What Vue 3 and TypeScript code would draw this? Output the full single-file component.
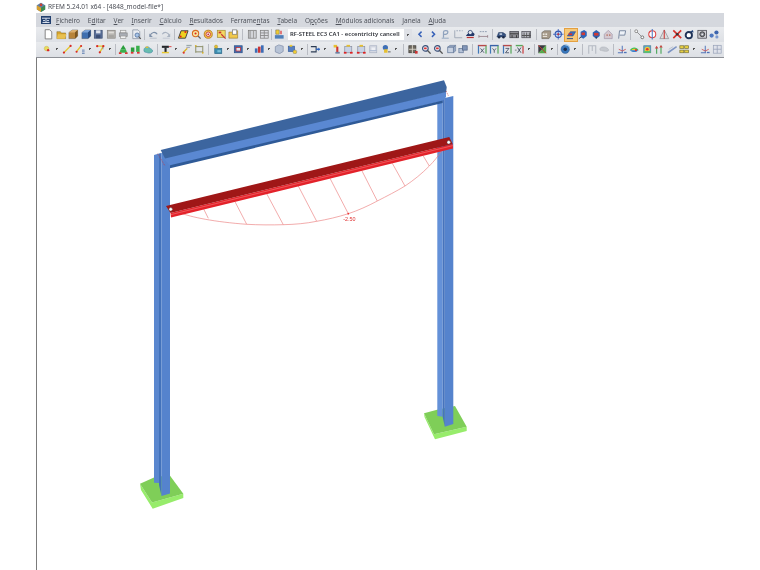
<script setup lang="ts">
type ToolItem = string | number

// tiny svg helpers, all icons live in a 12x12 box
const R = (x: number, y: number, w: number, h: number, f: string, s = 'none') =>
  `<rect x="${x}" y="${y}" width="${w}" height="${h}" fill="${f}" stroke="${s}" stroke-width=".8"/>`
const C = (x: number, y: number, r: number, f: string, s = 'none', sw = 0.9) =>
  `<circle cx="${x}" cy="${y}" r="${r}" fill="${f}" stroke="${s}" stroke-width="${sw}"/>`
const P = (d: string, f: string, s = 'none', sw = 0.9) =>
  `<path d="${d}" fill="${f}" stroke="${s}" stroke-width="${sw}"/>`

const box = (body: string, top: string, side: string) =>
  P('M1 4l4-3h6v7l-3 3H1z', body, '#666', 0.5) + P('M1 4l4-3h6L8 4z', top) + P('M8 4l3-3v7l-3 3z', side)
const blockRed = (c: string) =>
  R(2, 3, 8, 7, c, '#8a8fa0') + R(1, 9, 3, 2, '#d22') + R(8, 9, 3, 2, '#d22') + R(4, 1, 4, 2, '#e6c030')
const mag = (c: string) =>
  C(5, 5, 3.2, '#eef2f8', c, 1.3) + P('M7.5 7.5l3.5 3.5', 'none', '#555', 1.5) + R(3.5, 4, 3, 2, '#d33')
// force icons: coloured frame with a letter sketched in strokes
const fx = (top: string, letter: string) =>
  R(1, 1, 10, 1.6, top) + R(1, 2, 1.4, 9, '#3f78b8') + R(9.6, 2, 1.4, 9, '#58a85c') + P(letter, 'none', '#3a4358', 0.9)

const icons: Record<string, string> = {
  new: P('M2.5 .8h5l2.5 2.5v8h-7.5z', '#fff', '#6a6a6a'),
  open: P('M1 3h4l1 1.5h5v6.5H1z', '#d8a42c', '#7c6220', 0.5) + P('M2 6h10l-2 5H1z', '#e8c050'),
  stackO: box('#b8843a', '#dcb070', '#7c5620'),
  stackB: box('#3f6fb0', '#7ba3d8', '#27497e'),
  save: R(1.5, 1.5, 9, 9, '#5a6f98', '#3b4d72') + R(3.5, 1.5, 5, 3.5, '#dfe3ec') + R(3.5, 7, 5, 3.5, '#3d4f75'),
  saveAll: R(1.5, 1.5, 9, 9, '#b8b6b2', '#86837e') + R(3, 3, 6, 2, '#dedcd8') + R(3, 7, 6, 3, '#a6a4a0'),
  print: R(3, 1.5, 6, 3, '#eee', '#999') + R(1.5, 4.5, 9, 4, '#a9adb5', '#888') + R(3, 8, 6, 3, '#f2f2f2', '#999'),
  preview: P('M2 1h6l2 2v8H2z', '#e8ebf0', '#8a93a2') + C(7, 7, 2.4, '#a8c4e6', '#4f6f9f') + P('M8.7 8.7l2.5 2.5', 'none', '#555', 1.3),
  undo: P('M2.5 7.5c1-4 6-5 8-1.5', 'none', '#7d8fa8', 1.3) + P('M1.5 5v4h4z', '#7d8fa8') + P('M2 10.5h8', 'none', '#a8b2c0', 0.8),
  redo: P('M9.5 7.5c-1-4-6-5-8-1.5', 'none', '#a9b2c0', 1.3) + P('M10.5 5v4h-4z', '#a9b2c0') + P('M2 10.5h8', 'none', '#b8bfca', 0.8),
  para: P('M3.5 2h8l-3 8.5h-8z', '#f0d020', '#333', 1) + C(3, 8.5, 1.2, '#d22') + C(8.5, 3.5, 1.2, '#d22'),
  zoomY: C(5.2, 5.2, 3.6, '#f6e7a0', '#d86a20', 1.2) + C(5.2, 5.2, 1.2, '#d22') + P('M8 8l3 3', 'none', '#666', 1.5),
  target: C(6, 6, 4.6, '#f2c94a', '#b8741a', 1) + C(6, 6, 2.6, '#eee', '#c33', 1) + C(6, 6, 1, '#c22'),
  note: R(1.5, 1.5, 9, 8, '#f3d862', '#a08a30') + P('M6 6l5 5', 'none', '#c33', 1.3) + R(3, 3, 3, 2, '#c33'),
  folderW: P('M1 3.5h4l1-1.5h5v8.5H1z', '#f0c84c', '#8c6d20', 0.6) + R(5, 1, 5, 5, '#fff', '#777'),
  table1: R(1.5, 1.5, 9, 9, '#d2d4d9', '#777') + R(3, 1.5, 1, 9, '#888') + R(7, 1.5, 1, 9, '#999'),
  table2: R(1.5, 1.5, 9, 9, '#dcdde2', '#777') + R(1.5, 4, 9, 1, '#888') + R(1.5, 7, 9, 1, '#888') + R(5.5, 1.5, 1, 9, '#888'),
  loads: R(1, 7, 10, 4, '#4f7fb8') + P('M2 1h4v5H2z', '#f0cc30', '#555', 0.5) + P('M8 2v4', 'none', '#d22', 1.3),
  prev: P('M7.5 3L4.5 6l3 3', 'none', '#3560b8', 1.7),
  next: P('M4.5 3l3 3-3 3', 'none', '#3560b8', 1.7),
  bust: P('M4 10V3.5c0-2 5-2.5 5 0s-3 3-5 2.5', 'none', '#8ea2bd', 1.4) + P('M2 10.5h8', 'none', '#8ea2bd', 1),
  axes: P('M2 1.5v8.5h8.5', 'none', '#9aa4b2', 1) + P('M4 2h1.5M7 2h1.5M10 2h1', 'none', '#8594a8', 1),
  hat: P('M1 8c2-4 8-6 10-2l-1 2z', '#23396a') + C(6, 4, 2.4, '#e4e8ee', '#23396a') + R(2, 9, 8, 1.4, '#b33'),
  dim: P('M1 8.5h10M1 7v3M11 7v3', 'none', '#8a6f78', 0.8) + P('M2 3h2M5 3h2M8 3h2', 'none', '#8f9bb0', 1.1),
  car: P('M1 9l2-5h5l3 2v3z', '#35507e', '#1f3358', 0.5) + C(3.5, 9.5, 1.4, '#1c2a44') + C(8.5, 9.5, 1.4, '#1c2a44') + R(4, 5, 3, 1.6, '#dbe4f0'),
  chest: R(1, 3, 10, 7, '#8d8d93', '#3a3a44') + R(1, 5, 10, 1, '#333') + R(3, 7, 1, 3, '#333') + R(8, 7, 1, 3, '#333'),
  chest2: R(1, 3, 10, 7, '#bbbcc4', '#44444c') + R(1, 7, 10, 1, '#444') + R(3, 4, 1, 6, '#555') + R(6, 4, 1, 6, '#555') + R(9, 4, 1, 6, '#555'),
  block: P('M1 4l3-2h7v6l-2 3H1z', '#a49888', '#5c5850', 0.6) + R(2, 5, 2, 2, '#ece8e0') + R(5, 5, 2, 2, '#ece8e0') + R(2, 8, 5, 1, '#ece8e0'),
  gear: C(6, 6, 3.6, '#cfe0f5', '#2e55b4', 1.2) + P('M6 0v12M0 6h12', 'none', '#2e55b4', 0.9) + C(6, 6, 1.2, '#c33'),
  active: P('M1.5 8L5 3h6L8 8z', '#3a6dbb', '#2a4c90', 0.6) + R(3, 5, 4, 2, '#d8322c') + P('M1 11h7', 'none', '#2a4c90', 1.1),
  iso1: P('M3 3l4-2 3 2v5l-4 3-3-2z', '#2f65b8') + R(4, 4, 4, 3, '#d23a34') + P('M1 11l3-2', 'none', '#333', 1),
  iso2: P('M2 4l4-3 4 3v4l-4 3-4-3z', '#2f5fb0') + R(3.5, 4.5, 5, 3, '#cf3833') + P('M6 9v2', 'none', '#333', 1),
  house: P('M1.5 6L6 1.5 10.5 6v5h-9z', '#d4c8d0', '#9a8fa5', 0.7) + R(4, 6, 1.4, 2, '#b76') + R(7, 6, 1.4, 2, '#b76'),
  flagP: P('M3 11l1-9h7l-1 5H4', '#eef2f8', '#6c7c96', 1),
  chain: C(2.5, 2.5, 1.6, '#fff', '#777', 0.9) + C(9.5, 9.5, 1.6, '#fff', '#555', 0.9) + P('M3.5 3.5l5 5', 'none', '#888', 1),
  phi: C(6, 6, 4, '#fff', '#d44', 1.2) + P('M6 0v12', 'none', '#4d78c2', 1.2),
  tri: P('M6 1l5 10H1z', '#ddd', '#8a8a90', 0.8) + P('M6 1v10', 'none', '#c33', 1.2),
  cross: P('M1.5 1.5l9 9M10.5 1.5l-9 9', 'none', '#d6302a', 1.9) + C(6, 6, 1.5, '#333'),
  ring: C(5.5, 7, 3.6, '#fff', '#1f3358', 2.2) + P('M7 3l3-2 1 3z', '#26457a'),
  camera: R(1, 1.5, 10, 9, '#cfcfd4', '#3c3c44') + C(6, 6, 2.8, '#8c8f98', '#333', 1) + C(6, 6, 1, '#eee'),
  cluster: C(3, 7.5, 2.4, '#4f78c0') + C(8.5, 4, 2.4, '#3c64ad') + C(9, 9, 1.8, '#7c9ad0'),

  dot: C(5.2, 5.2, 2.6, '#e8dc60', '#c0b040', 0.5) + C(7, 7, 1.4, '#d82828'),
  line: P('M2 10L10 2', 'none', '#e2c830', 1.5) + C(2.2, 9.8, 1.3, '#d82828') + C(9.8, 2.2, 1.3, '#d82828'),
  lines: P('M1.5 9L7 2', 'none', '#e2c830', 1.5) + C(1.8, 8.8, 1.2, '#d82828') + C(7, 2.2, 1.2, '#d82828') + P('M8 7h3M8 9h3M8 11h3', 'none', '#4a6fa8', 0.9),
  hook: P('M2.5 2.5h7l-4 7', 'none', '#e2c830', 1.5) + P('M9 3v3', 'none', '#888', 1) + C(2.5, 2.5, 1.3, '#d82828') + C(9.5, 2.5, 1.3, '#d82828') + C(5.5, 9.5, 1.3, '#d82828'),
  green1: P('M6 1l3 5H3z', '#2a9e3c') + P('M3 6h6l1.5 4H1.5z', '#3ab04c') + R(1, 9.5, 3, 2, '#d33') + R(8, 9.5, 3, 2, '#d33'),
  green2: R(1, 4, 4, 5, '#2a9e3c') + R(7, 2, 4, 7, '#3ab04c') + R(1, 9, 3, 2, '#d33') + R(8, 9, 3, 2, '#d33'),
  cloud: P('M1 7c0-3 4-5 6-3s4 2 4 4-4 3-6 2-4 0-4-3z', '#68bdb0', '#4a8ea8', 0.7) + R(3, 3, 3, 1.5, '#e6c030'),
  hbeam: R(1, 2, 8, 2.4, '#26282c') + R(4, 4, 2.4, 6, '#26282c') + R(1, 9, 8, 1.6, '#e8c830') + P('M9 3h3', 'none', '#d33', 1),
  arrows: P('M1 10l5-5', 'none', '#d8b020', 1.6) + R(5, 1, 6, 1.5, '#9aa') + R(5, 3.4, 4, 1.2, '#aab') + C(2, 10, 1.2, '#d33'),
  frame: P('M2 2v8M10 2v8M2 3h8M2 9h8', 'none', '#8a8d66', 1.1) + C(2, 2, 1, '#d8b020') + C(10, 10, 1, '#d8b020'),
  tealBox: R(2, 5, 8, 6, '#3d8db0', '#2d6a8c') + R(5, 7, 4, 2.4, '#7cc0d8') + C(3.5, 3, 1.8, '#e6c030', '#a08a20', 0.5),
  redBox: R(1.5, 2, 9, 8, '#3f6eb2', '#2c4e86') + R(3.5, 4, 5, 4, '#dfe6f0', '#c22'),
  bars: R(1, 5, 3, 5, '#3d6db5') + R(4.5, 3, 3, 7, '#c33') + R(8, 1.5, 3, 8.5, '#3d6db5'),
  shield: P('M1.5 3l4-2 5 1.5v6l-4 2.5-5-2z', '#b7c3d6', '#7f8da8', 0.8),
  bluePin: R(1.5, 2.5, 7, 6, '#567fc0', '#365c9a') + R(3, 1, 3, 2, '#f0cc30') + C(9, 9, 2.2, '#f0cc30', '#777', 0.5),
  pipe: P('M1 3h6v6H1', 'none', '#2c3c54', 1.2) + P('M7 6h4', 'none', '#2a62c0', 1.6) + P('M9.5 4l2 2-2 2z', '#2a62c0'),
  ruler: R(3, 1, 4, 3, '#e6c030') + R(6, 3, 2.4, 7, '#d03430') + R(5, 9, 5, 2, '#6d7fa0'),
  blockR: blockRed('#c7d2e6'),
  blockF: R(2, 2, 8, 8, '#d4d8e2', '#aab2c4') + R(4, 4, 4, 4, '#eef0f5') + R(2, 7, 8, 1, '#aab8d2'),
  person: C(5, 4, 3, '#3f6fb5') + R(3.5, 6, 4, 4, '#e6c030') + P('M8 9h3', 'none', '#555', 1),
  tool: R(1, 2, 8, 8, '#6f6a60', '#3c3a36') + P('M5 1v10M1 6h9', 'none', '#e0dcd0', 1) + R(8, 8, 3, 3, '#c33'),
  magR: mag('#3a4f78'),
  cube: R(2, 3.5, 6.5, 6.5, '#c8d2e2', '#5f7596') + P('M2 3.5l2.5-2h6.5l-2.5 2zM8.5 3.5l2.5-2v6.5l-2.5 2z', '#98a9c4', '#5f7596', 0.6),
  cubes: R(1, 5, 5, 5, '#b6c3d8', '#5f7596') + R(5, 2, 5.5, 5, '#8296b8', '#4d6284'),
  fxX: fx('#b84a4a', 'M4 5l4 5M8 5l-4 5'),
  fxY: fx('#3a62a8', 'M4 5l2 2.5 2-2.5M6 7.5V10'),
  fxZ: fx('#b84a4a', 'M4 5h4l-4 5h4'),
  xz: P('M1 7h2', 'none', '#666', 0.9) + P('M4 4l4 6M8 4l-4 6', 'none', '#3a4358', 1) + R(2, 1, 8, 1.6, '#58a85c') + R(9.6, 2, 1.4, 9, '#c84040'),
  corner: P('M1.5 1.5h9l-9 9z', '#3a3c42') + P('M10.5 1.5v9h-9z', '#58a84a') + P('M1.5 1.5l9 9', 'none', '#c33', 1),
  disc: C(6, 6, 4.8, '#3a78bc', '#2a5a94', 0.6) + C(6, 6, 2, '#1d2c4a') + P('M6 1c3 0 5 2 5 4', 'none', '#9cc6e8', 1.2),
  frameG: P('M2 11V2h8v9M6 2v6', 'none', '#b4b9c2', 1.2),
  cloudG: P('M1 6c0-3 5-3 7-2s3 2 3 3-3 2-6 1-4 0-4-2z', '#c5c9cf', '#a8acb4', 0.6),
  beamP: P('M1 10h6M6 2v8', 'none', '#4d72b8', 1.1) + P('M2 6l4 2 4-2', 'none', '#c44', 0.9) + R(8, 9, 3, 1.5, '#4d72b8'),
  rainbow: P('M1 7c2-4 8-4 10 0z', '#3ebf5c') + P('M3 7c1-2 5-2 6 0z', '#f0cc30') + P('M1 7c3 3 7 3 10 0z', '#3a7fd0') + C(8, 7, 1.2, '#d33'),
  rainbowB: R(2, 2, 8, 8, '#5ea7c8', '#4f7f96') + C(6, 6, 3, '#f0cc30') + C(6, 6, 1.5, '#d33') + R(2, 8, 8, 2, '#5cc46a'),
  arrowsG: P('M3 11V4M8 11V2', 'none', '#4da85c', 1.3) + P('M1 5l2-3 2 3zM6 4l2-3 2 3z', '#c44'),
  lineB: P('M1 10L11 3', 'none', '#7d95c4', 1.8) + P('M2 6l5-3', 'none', '#b7bfcc', 1),
  yGrid: R(1, 2, 4.5, 3, '#e8d040', '#78723a') + R(6.5, 2, 4.5, 3, '#e8d040', '#78723a') + R(1, 7, 4.5, 3, '#e8d040', '#78723a') + R(6.5, 7, 4.5, 3, '#e8d040', '#78723a'),
  gridB: R(1.5, 1.5, 9, 9, '#dfe2ea', '#98a2b8') + P('M6 1.5v9M1.5 6h9', 'none', '#98a2b8', 0.9),
}

const menus: [string, string, string][] = [
  ['', 'F', 'icheiro'], ['E', 'd', 'itar'], ['', 'V', 'er'], ['', 'I', 'nserir'],
  ['', 'C', 'álculo'], ['', 'R', 'esultados'], ['Ferrame', 'n', 'tas'], ['', 'T', 'abela'],
  ['O', 'p', 'ções'], ['', 'M', 'ódulos adicionais'], ['', 'J', 'anela'], ['', 'A', 'juda'],
]

// numbers are separators of that width, 'v' is a dropdown arrow
const upperLeft: ToolItem[] = [
  'new', 'open', 'stackO', 'stackB', 'save', 'saveAll', 'print', 'preview', 5,
  'undo', 'redo', 5, 'para', 'zoomY', 'target', 'note', 'folderW', 6, 'table1', 'table2', 2, 'loads',
]
const upperRight: ToolItem[] = [
  'prev', 'next', 'bust', 'axes', 'hat', 'dim', 6, 'car', 'chest', 'chest2', 7,
  'block', 'gear', 'active', 'iso1', 'iso2', 'house', 'flagP', 6,
  'chain', 'phi', 'tri', 'cross', 'ring', 'camera', 'cluster',
]
const lower: ToolItem[] = [
  'dot', 'v', 'line', 'lines', 'v', 'hook', 'v', 2, 'green1', 'green2', 'cloud', 6,
  'hbeam', 'v', 'arrows', 'frame', 6, 'tealBox', 'v', 'redBox', 'v', 'bars', 'v', 'shield', 'bluePin', 'v', 3,
  'pipe', 'v', 'ruler', 'blockR', 'blockR', 'blockF', 'person', 'v', 7,
  'tool', 'magR', 'magR', 'cube', 'cubes', 6, 'fxX', 'fxY', 'fxZ', 'xz', 'v', 2, 'corner', 'v', 3,
  'disc', 'v', 6, 'frameG', 'cloudG', 5,
  'beamP', 'rainbow', 'rainbowB', 'arrowsG', 'lineB', 'yGrid', 'v', 'beamP', 'gridB',
]

const curve = 'M180 211.7C190 216 215 221 246.7 223.3C258 224 272 224 283.3 223.7C295 223.4 306 222.5 316.7 220.3C327 218.5 338 216 348.3 212.7C358 209.5 368 205 377.3 200C387 195 396 190.5 405 185C414 179 422 172.5 429.3 165C434 160.5 438 155 441.7 150'

const ticks = [
  [203.3, 207.3, 208.3, 217.3],
  [235, 200.7, 246.7, 223.3],
  [266.7, 192.7, 283.3, 223.7],
  [298.3, 185, 316.7, 220.3],
  [330, 177.3, 348.3, 212.7],
  [361.7, 169.3, 377.3, 200],
  [392.3, 162.3, 405, 185],
  [423.3, 155, 429.3, 165],
]

// drawing coordinates are page pixels, see viewBox on the svg
const plates = [
  { top: '140,482.7 154,476.5 169.5,474 183.3,492.7 152,501.5', sides: '140,482.7 152,501.5 183.3,492.7 183.3,497 152.7,507.7 141,489' },
  { top: '424,412.3 438,408.5 455,405 466.7,425.7 434,433.3', sides: '424,412.3 434,433.3 466.7,425.7 466.7,430 435,438.3 424.5,416' },
]
</script>

<template>
  <div class="page">
    <div class="title-bar">
      <svg class="app-icon" viewBox="0 0 12 12" width="10" height="10">
        <path d="M1 4l5-3 5 3v5l-5 3-5-3z" fill="#5b7fa8" />
        <path d="M1 4l5 3v5l-5-3z" fill="#d8a030" />
        <path d="M6 7l5-3v5l-5 3z" fill="#3f8a50" />
        <circle cx="6" cy="3.5" r="1.6" fill="#c84030" />
      </svg>
      <span>RFEM 5.24.01 x64 - [4848_model-file*]</span>
    </div>

    <nav class="menu-bar">
      <svg class="menu-logo" viewBox="0 0 10 8" width="10" height="8">
        <rect width="10" height="8" fill="#23406f" />
        <path d="M1 2.2h8M5 2.2v4.6M2 4.6h2M6 4.6h2M1.5 6.5h7" stroke="#e8eef8" stroke-width=".9" />
      </svg>
      <span v-for="m in menus" :key="m[2]" class="menu-item">{{ m[0] }}<u>{{ m[1] }}</u>{{ m[2] }}</span>
    </nav>

    <div class="toolbar first">
      <template v-for="(item, i) in upperLeft" :key="i">
        <span v-if="typeof item === 'number'" class="sep" :style="{ width: item + 'px' }"></span>
        <svg v-else class="tool" viewBox="0 0 12 12" v-html="icons[item]"></svg>
      </template>
      <div class="combo">
        <span class="combo-text">RF-STEEL EC3 CA1 - eccentricity cancell</span>
        <span class="combo-arrow"></span>
      </div>
      <template v-for="(item, i) in upperRight" :key="i">
        <span v-if="typeof item === 'number'" class="sep" :style="{ width: item + 'px' }"></span>
        <span v-else-if="item === 'active'" class="tool-wrap on">
          <svg class="tool" viewBox="0 0 12 12" v-html="icons[item]"></svg>
        </span>
        <svg v-else class="tool" viewBox="0 0 12 12" v-html="icons[item]"></svg>
      </template>
    </div>

    <div class="toolbar second">
      <template v-for="(item, i) in lower" :key="i">
        <span v-if="typeof item === 'number'" class="sep" :style="{ width: item + 'px' }"></span>
        <span v-else-if="item === 'v'" class="drop"></span>
        <svg v-else class="tool" viewBox="0 0 12 12" v-html="icons[item]"></svg>
      </template>
    </div>

    <main class="canvas">
      <svg class="model" viewBox="37 57 723 513" width="723" height="513">
        <!-- base plates -->
        <g v-for="(p, i) in plates" :key="i">
          <polygon :points="p.sides" fill="#97ec6b" />
          <polygon :points="p.top" fill="#7fce58" />
        </g>

        <!-- columns -->
        <polygon points="154,154 159,152.5 159,482 154,481.7" fill="#5a87cf" />
        <polygon points="159,152.5 161.5,152 161.5,495 159,484" fill="#4272bb" />
        <polygon points="161.5,152 170,150 170,492.5 161.5,495" fill="#5583cd" />
        <polygon points="437.3,98 442.7,97 442.7,415.7 437.3,415" fill="#6491d8" />
        <polygon points="442.7,97 444.8,97 444.8,425.7 442.7,416" fill="#4773bc" />
        <polygon points="444.8,97 453.3,95 453.3,423 444.8,425.7" fill="#5583cd" />

        <!-- top beam -->
        <polygon points="163,156.5 446,90.5 446,96 442.7,100 170,165" fill="#5a88d2" />
        <polygon points="170,164.2 442.7,99.4 442.7,102 170,167.2" fill="#2f5a97" />
        <polygon points="160.7,149 444,79.3 446.7,86 446.2,91 165,157.5" fill="#3c659f" />
        <path d="M157.7 152.7L165 165M446 90L448.5 95" class="joint" />

        <!-- result diagram -->
        <path :d="curve" class="diagram" />
        <line v-for="(t, i) in ticks" :key="i" :x1="t[0]" :y1="t[1]" :x2="t[2]" :y2="t[3]" class="diagram" />
        <circle cx="348.3" cy="212.7" r=".9" fill="#e33" />
        <text x="349.3" y="220.4" class="value">-2.50</text>

        <!-- loaded member -->
        <polygon points="170.5,212 452.7,143 453,147.5 171,216.5" fill="#e3222a" />
        <polygon points="166,205 449.3,136 452.7,143 170.5,212" fill="#9f1717" />
        <path d="M171 213.6L452.8 144.6" stroke="#f58a8a" stroke-width=".5" />
        <circle cx="170.7" cy="208.3" r="1.7" fill="#fff" stroke="#555" stroke-width=".4" />
        <circle cx="448.7" cy="141.3" r="1.7" fill="#fff" stroke="#555" stroke-width=".4" />
      </svg>
    </main>
  </div>
</template>

<style scoped>
.page {
  width: 760px;
  height: 570px;
  display: flex;
  flex-direction: column;
  padding-left: 36px;
  box-sizing: border-box;
  overflow: hidden;
  font-family: "Noto Sans", "Open Sans", sans-serif;
  color: #3c4048;
}

.title-bar {
  height: 13px;
  flex-shrink: 0;
  display: flex;
  align-items: center;
  gap: 2px;
  font-size: 6.5px;
  color: #4a4d55;
  filter: blur(0.3px);
}

.menu-bar {
  width: 688px;
  height: 14px;
  flex-shrink: 0;
  display: flex;
  align-items: center;
  gap: 7.8px;
  padding-left: 5px;
  box-sizing: border-box;
  background: #d5d8de;
  font-size: 6.5px;
  color: #50545c;
  filter: blur(0.3px);
}

.menu-logo {
  margin-right: -2.8px;
}

.menu-item u {
  text-underline-offset: 1px;
  text-decoration-thickness: 0.5px;
}

.toolbar {
  width: 688px;
  height: 15px;
  flex-shrink: 0;
  display: flex;
  align-items: center;
  box-sizing: border-box;
  background: linear-gradient(#e9ebee, #dde0e5);
  filter: blur(0.4px);
}

.toolbar.first {
  padding-left: 6px;
}

.toolbar.second {
  padding-left: 4.75px;
  border-bottom: 1px solid #8d9096;
  height: 16px;
  padding-bottom: 1px;
}

.tool {
  flex: 0 0 auto;
  width: 12.5px;
  height: 10.5px;
}

.tool-wrap {
  flex: 0 0 auto;
  display: flex;
  align-items: center;
  height: 12px;
}

.tool-wrap.on {
  background: #f6c878;
  outline: 0.5px solid #e4a040;
  outline-offset: -0.5px;
}

.sep {
  flex: 0 0 auto;
  height: 11px;
  background: linear-gradient(#b9bcc3, #b9bcc3) center / 1px 100% no-repeat;
}

.drop {
  flex: 0 0 auto;
  width: 8px;
  height: 11px;
  background: linear-gradient(135deg, #555 50%, transparent 50%) center / 3px 2px no-repeat;
}

.combo {
  flex: 0 0 auto;
  width: 124px;
  height: 11px;
  margin: 0 2px 0 3px;
  display: flex;
  background: #fff;
}

.combo-text {
  flex: 1;
  white-space: nowrap;
  font-size: 5.9px;
  line-height: 11px;
  font-weight: 600;
  color: #30333a;
  padding-left: 2px;
}

.combo-arrow {
  flex: 0 0 8px;
  background: #dfe1e6;
  background-image: linear-gradient(135deg, #555 50%, transparent 50%);
  background-size: 3px 2px;
  background-repeat: no-repeat;
  background-position: center;
}

.canvas {
  flex: 1;
  min-height: 0;
  border-left: 1px solid #7b7b7b;
}

.model {
  display: block;
  filter: blur(0.25px);
}

.diagram {
  fill: none;
  stroke: #ea7474;
  stroke-width: 0.6;
}

.joint {
  fill: none;
  stroke: #c8343a;
  stroke-width: 0.6;
  stroke-dasharray: 1.2 0.8;
}

.value {
  font-family: "Liberation Sans", sans-serif;
  font-size: 5.4px;
  fill: #df3030;
  text-anchor: middle;
}
</style>

<style>
html,
body {
  margin: 0;
  background: #fff;
  overflow: hidden;
}
</style>
